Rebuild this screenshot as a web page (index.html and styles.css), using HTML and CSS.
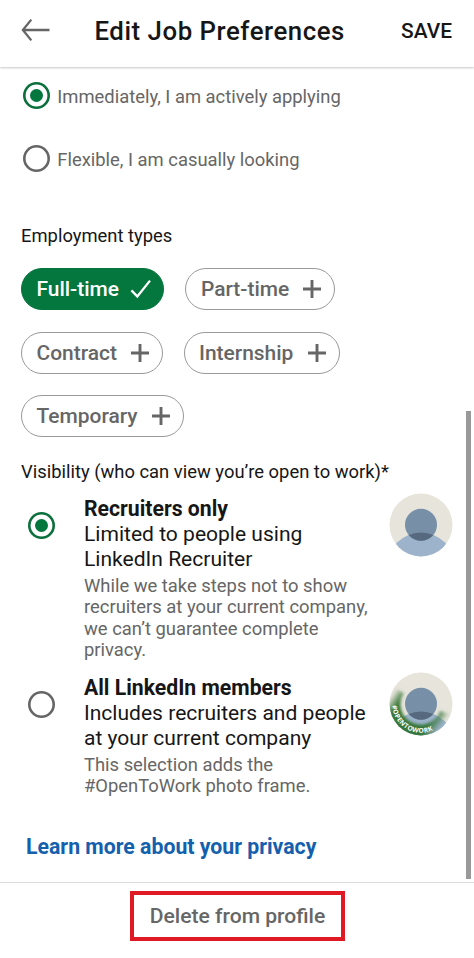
FILE: index.html
```html
<!DOCTYPE html>
<html lang="en">
<head>
<meta charset="utf-8">
<title>Edit Job Preferences</title>
<link rel="stylesheet" href="styles.css">
</head>
<body>
<div class="screen">
  <header class="header">
    <svg class="back" width="30" height="24" viewBox="0 0 30 24"><path d="M28.5 12H2M10.3 1.6 1.9 12l8.4 10.4" fill="none" stroke="#666" stroke-width="2.3"/></svg>
    <h1 class="title">Edit Job Preferences</h1>
    <span class="save">SAVE</span>
  </header>
  <main class="content">
    <div class="option"><span class="radio checked"></span><span class="option-label">Immediately, I am actively applying</span></div>
    <div class="option"><span class="radio"></span><span class="option-label">Flexible, I am casually looking</span></div>
    <h2 class="section employment">Employment types</h2>
    <div class="chips">
      <div class="chip-row">
        <span class="chip selected full">Full-time<svg width="22" height="20" viewBox="0 0 22 20"><path d="M1.4 11.4 7.3 17.4 20 1.6" fill="none" stroke="#fff" stroke-width="2.3"/></svg></span>
        <span class="chip part">Part-time<svg width="18" height="18" viewBox="0 0 18 18"><path d="M9 0v18M0 9h18" stroke="#666" stroke-width="2.9"/></svg></span>
      </div>
      <div class="chip-row">
        <span class="chip contract">Contract<svg width="18" height="18" viewBox="0 0 18 18"><path d="M9 0v18M0 9h18" stroke="#666" stroke-width="2.9"/></svg></span>
        <span class="chip intern">Internship<svg width="18" height="18" viewBox="0 0 18 18"><path d="M9 0v18M0 9h18" stroke="#666" stroke-width="2.9"/></svg></span>
      </div>
      <div class="chip-row">
        <span class="chip temp">Temporary<svg width="18" height="18" viewBox="0 0 18 18"><path d="M9 0v18M0 9h18" stroke="#666" stroke-width="2.9"/></svg></span>
      </div>
    </div>
    <h2 class="section visibility">Visibility (who can view you’re open to work)*</h2>
    <div class="audience">
      <span class="radio checked"></span>
      <div class="copy">
        <div class="name">Recruiters only</div>
        <div class="lead">Limited to people using<br>LinkedIn Recruiter</div>
        <div class="note">While we take steps not to show<br>recruiters at your current company,<br>we can’t guarantee complete<br>privacy.</div>
      </div>
      <svg class="avatar" width="64" height="64" viewBox="0 0 64 64">
        <defs><clipPath id="face"><circle cx="32" cy="32" r="31.5"/></clipPath><clipPath id="head"><circle cx="32" cy="31.7" r="16"/></clipPath></defs>
        <g clip-path="url(#face)">
          <rect width="64" height="64" fill="#e7e4dc"/>
          <circle cx="32" cy="73.6" r="34" fill="#9cb3cb"/>
          <circle cx="32" cy="31.7" r="16" fill="#788fa8"/>
          <circle cx="32" cy="73.6" r="34" fill="#56697f" clip-path="url(#head)"/>
        </g>
      </svg>
    </div>
    <div class="audience members">
      <span class="radio"></span>
      <div class="copy">
        <div class="name">All LinkedIn members</div>
        <div class="lead">Includes recruiters and people<br>at your current company</div>
        <div class="note">This selection adds the<br>#OpenToWork photo frame.</div>
      </div>
      <svg class="avatar" width="64" height="64" viewBox="0 0 64 64">
        <defs>
          <filter id="soft" filterUnits="userSpaceOnUse" x="-10" y="-10" width="90" height="90"><feGaussianBlur stdDeviation="1.6"/></filter>
          <linearGradient id="fade" gradientUnits="userSpaceOnUse" x1="8" y1="16" x2="57" y2="51"><stop offset="0" stop-color="#3a7838" stop-opacity="0"/><stop offset=".17" stop-color="#3a7838"/><stop offset=".78" stop-color="#35763a"/><stop offset=".97" stop-color="#3a7838" stop-opacity="0"/></linearGradient>
          <path id="ring" d="M3.2 32a28.8 28.8 0 0 0 57.6 0"/>
        </defs>
        <g clip-path="url(#face)">
          <rect width="64" height="64" fill="#e7e4dc"/>
          <circle cx="32" cy="73.6" r="34" fill="#9cb3cb"/>
          <path d="M7.4 16.6A29 29 0 1 0 59.2 41.9" fill="none" stroke="url(#fade)" stroke-width="17" filter="url(#soft)"/>
          <circle cx="32" cy="31.7" r="16" fill="#788fa8"/>
          <circle cx="32" cy="73.6" r="34" fill="#56697f" clip-path="url(#head)"/>
        </g>
        <text class="frame-text"><textPath href="#ring" startOffset="1.5" textLength="56">#OPENTOWORK</textPath></text>
      </svg>
    </div>
    <a class="learn">Learn more about your privacy</a>
    <div class="scrollbar"></div>
  </main>
  <footer class="footer"><span class="delete">Delete from profile</span></footer>
</div>
</body>
</html>
```
FILE: styles.css
```css
* { box-sizing: border-box; }
body { margin: 0; background: #fff; font-family: Roboto, "Liberation Sans", sans-serif; color: #161616; }
.screen { width: 474px; height: 958px; display: flex; flex-direction: column; overflow: hidden; }
svg { display: block; flex: none; }
h1, h2 { margin: 0; }
.header { height: 67px; flex: none; display: flex; align-items: flex-start; box-shadow: 0 1px 2px rgba(0,0,0,.22); white-space: nowrap; }
.back { margin: 18px 0 0 21px; }
.title { margin-left: 43.5px; width: 262.5px; padding-top: 15px; font-size: 25.8px; line-height: 32px; font-weight: 500; letter-spacing: .53px; }
.save { margin-left: 44px; padding-top: 17px; font-size: 20.9px; line-height: 28px; font-weight: 500; }
.content { position: relative; height: 815px; flex: none; padding: 14px 0 0 21px; white-space: nowrap; }
.option { display: flex; align-items: center; height: 30px; margin-bottom: 33.4px; }
.radio { width: 27px; height: 27px; flex: none; box-shadow: inset 0 0 0 2.6px #666; border-radius: 50%; display: flex; align-items: center; justify-content: center; }
.option .radio { margin: -1px 0 0 2px; }
.radio.checked { box-shadow: inset 0 0 0 2.6px #0c703c; }
.radio.checked::after { content: ""; width: 13px; height: 13px; border-radius: 50%; background: #04773e; }
.option-label { margin: 1px 0 0 7.3px; color: #666; font-size: 18.4px; line-height: 24px; }
.section { font-size: 18.4px; line-height: 24px; font-weight: 400; }
.employment { margin-top: 49.6px; }
.chips { display: flex; flex-direction: column; gap: 21.3px; margin-top: 20.3px; }
.chip-row { display: flex; gap: 21px; }
.chip { height: 42px; display: flex; align-items: center; justify-content: space-between; padding: 0 12.5px 0 14.5px; border: 1px solid #999; border-radius: 21px; color: #666; font-size: 20.95px; line-height: 24px; font-weight: 500; }
.selected { background: #04773e; border-color: #04773e; color: #fff; }
.full { width: 143.4px; padding-right: 11px; }
.part { width: 149.5px; }
.contract { width: 141.5px; }
.intern { width: 156px; }
.temp { width: 162.5px; }
.visibility { margin-top: 23.1px; }
.audience { display: flex; height: 179px; padding-top: 12px; }
.audience .radio { margin: 16px 0 0 7px; }
.copy { width: 305.3px; margin-left: 29px; }
.name, .lead { font-size: 21.05px; line-height: 25.2px; }
.name { font-weight: 700; font-size: 21.2px; }
.note { margin-top: 3px; color: #666; font-size: 18.4px; line-height: 21.6px; }
.avatar { margin-top: -2.5px; }
.frame-text { font: 700 6.7px "Open Sans", sans-serif; fill: #fff; }
.learn { display: block; margin: -7.6px 0 0 5px; color: #1460ad; font-size: 21.25px; line-height: 26px; font-weight: 700; }
.scrollbar { position: absolute; right: 3px; top: 344px; width: 5px; height: 468px; background: #999; }
.footer { flex: 1; border-top: 1px solid #ddd; display: flex; }
.delete { width: 215px; height: 50px; margin: 8px 0 0 130px; border: 4px solid #e11924; color: #666; font-size: 21.1px; line-height: 42px; font-weight: 500; text-align: center; white-space: nowrap; }
```
